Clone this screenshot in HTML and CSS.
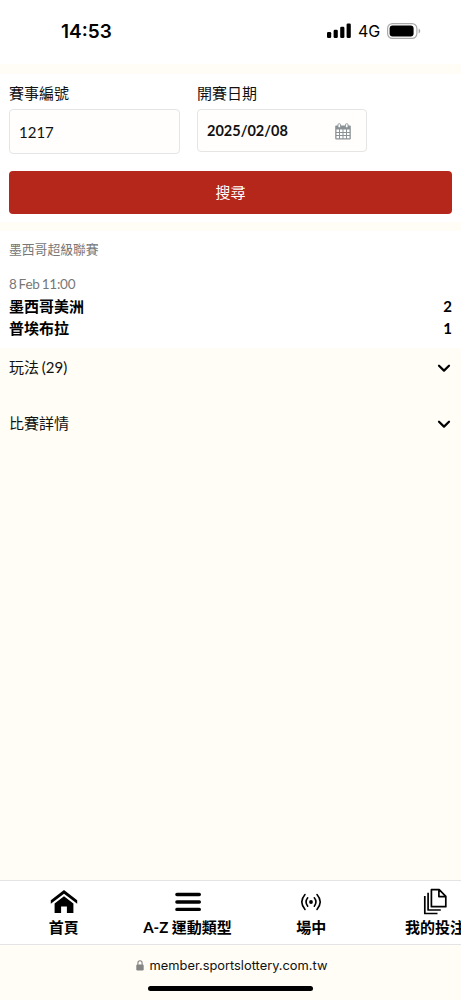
FILE: index.html
```html
<!DOCTYPE html>
<html lang="zh-Hant">
<head>
<meta charset="utf-8">
<meta name="viewport" content="width=device-width, initial-scale=1">
<title>賽事結果</title>
<link rel="stylesheet" href="styles.css">
</head>
<body>
<div class="screen">
  <header class="status">
    <span class="time">14:53</span>
    <div class="indicators">
      <svg class="signal" width="24" height="16" viewBox="0 0 24 16"><rect x="0" y="9" width="4.2" height="6" rx="1.3"/><rect x="6.6" y="6.7" width="4.2" height="8.3" rx="1.3"/><rect x="13.2" y="3.7" width="4.2" height="11.3" rx="1.3"/><rect x="19.6" y="0.5" width="4.2" height="14.5" rx="1.3"/></svg>
      <span class="network">4G</span>
      <svg width="34" height="17" viewBox="0 0 34 17"><rect x=".6" y=".6" width="29.3" height="14.8" rx="4.8" fill="none" stroke="#aaa" stroke-width="1.2"/><rect x="2.6" y="2.6" width="24" height="10.8" rx="3"/><path d="M31.6 5.5q1.7.8 1.7 2.5t-1.7 2.5z" fill="#aaa"/></svg>
    </div>
  </header>

  <form class="search">
    <div class="fields">
      <div class="field field-id">
        <label>賽事編號</label>
        <div class="box box-id">1217</div>
      </div>
      <div class="field field-date">
        <label>開賽日期</label>
        <div class="box box-date"><span>2025/02/08</span>
          <svg class="calendar" width="16" height="17" viewBox="0 0 16 17"><path d="M1 2.5h14a.8.8 0 0 1 .8.8v12.2a1 1 0 0 1-1 1H1.2a1 1 0 0 1-1-1V3.3a.8.8 0 0 1 .8-.8z" fill="#8b9295"/><path d="M1.5 6.6h2.500v2.300h-2.500zM5 6.600h2.500v2.300H5zM8.500 6.600H11v2.300H8.500zM12 6.600h2.500v2.300H12zM1.500 9.900h2.500v2.200h-2.500zM5 9.900h2.500v2.200H5zM8.500 9.900H11v2.200H8.500zM12 9.900h2.500v2.200H12zM1.500 13.100h2.500v2.200h-2.500zM5 13.100h2.500v2.200H5zM8.500 13.100H11v2.200H8.500zM12 13.100h2.500v2.200H12z" fill="#fff"/><rect x="3" y=".7" width="2.500" height="4" rx="1.100" fill="#fff" stroke="#8b9295" stroke-width=".9"/><rect x="10.500" y=".7" width="2.500" height="4" rx="1.100" fill="#fff" stroke="#8b9295" stroke-width=".9"/></svg>
        </div>
      </div>
    </div>
    <button class="submit" type="button">搜尋</button>
  </form>

  <section class="match">
    <div class="league">墨西哥超級聯賽</div>
    <div class="kickoff">8 Feb 11:00</div>
    <div class="team"><span>墨西哥美洲</span><span class="score">2</span></div>
    <div class="team"><span>普埃布拉</span><span class="score">1</span></div>
  </section>

  <main class="details">
    <div class="row"><span class="row-title">玩法 (29)</span><svg class="chevron" width="14" height="9" viewBox="0 0 14 9"><path d="M2 1.700 7 6.600l5-4.900"/></svg></div>
    <div class="row"><span class="row-title">比賽詳情</span><svg class="chevron" width="14" height="9" viewBox="0 0 14 9"><path d="M2 1.700 7 6.600l5-4.900"/></svg></div>
  </main>

  <nav class="tabs">
    <div class="tab">
      <svg width="28" height="28" viewBox="0 0 28 28"><path d="M14 3 .8 13.200v3.500L14 6.700l13.200 10v-3.500z"/><path d="M14 9.300 4.600 16.500V26h6.500v-6.500h5.800V26h6.500v-9.500z"/></svg>
      <span>首頁</span>
    </div>
    <div class="tab">
      <svg width="28" height="28" viewBox="0 0 28 28"><path d="M2.900 7.500h22.400M2.900 15h22.400M2.900 22.400h22.400" fill="none" stroke="#000" stroke-width="3.400" stroke-linecap="round"/></svg>
      <span>A-Z 運動類型</span>
    </div>
    <div class="tab">
      <svg width="28" height="28" viewBox="0 0 28 28"><circle cx="14" cy="15" r="1.900"/><path d="M10.700 10.800q-3.300 4.200 0 8.400M17.300 10.800q3.300 4.200 0 8.400M8 7.600q-6.400 7.400 0 14.800M20 7.600q6.400 7.400 0 14.800" fill="none" stroke="#000" stroke-width="1.600" stroke-linecap="round"/></svg>
      <span>場中</span>
    </div>
    <div class="tab">
      <svg width="28" height="28" viewBox="0 0 28 28"><g fill="none" stroke="#000" stroke-width="1.700" stroke-linejoin="round"><path d="M10.400 2.700h7.800l6.600 6.600v10.400H10.400zM17.900 2.700v6.900h6.900M7.100 5.700V23h12.700M3.800 9v17.500h12.700"/></g></svg>
      <span>我的投注</span>
    </div>
  </nav>

  <footer class="browser">
    <div class="address"><svg width="8" height="11" viewBox="0 0 8 11"><rect x=".3" y="4.500" width="7.400" height="6" rx="1.200" fill="#858585"/><path d="M1.900 5V3a2.100 2.300 0 0 1 4.200 0v2" fill="none" stroke="#858585" stroke-width="1.100"/></svg><span>member.sportslottery.com.tw</span></div>
    <div class="home-bar"></div>
  </footer>
</div>
</body>
</html>
```
FILE: styles.css
```css
* { box-sizing: border-box; }
body {
  margin: 0;
  background: #fffdf5;
  color: #111;
  font-family: Lato, "Noto Sans CJK TC", sans-serif;
  font-size: 15px;
}
svg { display: block; flex: none; }
.screen {
  display: flex;
  flex-direction: column;
  width: 461px;
  height: 1000px;
  overflow: hidden;
}
.status {
  display: flex;
  justify-content: space-between;
  height: 64px;
  padding: 20px 40px 0 61px;
  background: #fff;
  color: #000;
  font-family: Inter, sans-serif;
}
.time { font-size: 19px; font-weight: 600; line-height: 23px; }
.indicators { display: flex; align-items: center; height: 23px; }
.signal { margin-bottom: 1px; }
.network { width: 29px; margin-left: 7px; font-size: 16px; font-weight: 400; line-height: 23px; }
.search {
  height: 148px;
  margin-top: 10px;
  padding: 9px 9px 0;
  background: #fff;
}
.fields { display: flex; gap: 17px; height: 88px; }
.field label { display: block; height: 26px; line-height: 20px; }
.field-id { width: 171px; }
.field-date { width: 170px; }
.box {
  display: flex;
  align-items: center;
  border: 1px solid #e5e5e5;
  border-radius: 4px;
  background: #fffefc;
  padding: 0 9px;
}
.box-id { height: 45px; font-size: 15px; }
.box-date { justify-content: space-between; height: 43px; padding-right: 15px; font-size: 14.500px; font-weight: 700; }
.calendar { margin-top: 2px; }
.submit {
  display: block;
  width: 100%;
  height: 43px;
  padding: 0 0 2px;
  border: 0;
  border-radius: 4px;
  background: #b5261b;
  color: #fff;
  font: inherit;
}
.match {
  height: 117px;
  margin-top: 9px;
  padding: 8px 9px 0;
  background: #fff;
}
.league, .kickoff { color: #777; font-size: 12.800px; line-height: 20px; }
.kickoff { margin-top: 15px; font-size: 13.500px; letter-spacing: -.2px; word-spacing: -1.300px; }
.team {
  display: flex;
  justify-content: space-between;
  height: 21.500px;
  color: #000;
  font-weight: 700;
  line-height: 24px;
}
.details { flex: 1; padding: 0 9px; }
.row {
  display: flex;
  align-items: center;
  justify-content: space-between;
  height: 40px;
  margin-bottom: 16px;
}
.row-title { padding-bottom: 4px; word-spacing: -1px; }
.chevron { margin-right: 1px; fill: none; stroke: #000; stroke-width: 2.200; stroke-linecap: round; stroke-linejoin: round; }
.tabs {
  display: flex;
  height: 65px;
  padding-left: 2px;
  border-top: 1px solid #e4e4e4;
  border-bottom: 1px solid #e4e4e4;
  background: #fff;
}
.tab {
  display: flex;
  flex: 0 0 123.700px;
  flex-direction: column;
  align-items: center;
  padding-top: 6px;
  color: #000;
  font-size: 15px;
  font-weight: 700;
  line-height: 24px;
  white-space: nowrap;
}
.browser { height: 55px; padding-top: 10px; }
.address {
  display: flex;
  align-items: center;
  justify-content: center;
  gap: 6px;
  height: 20px;
  padding-left: 2px;
  font-family: Inter, sans-serif;
  font-size: 12.850px;
}
.home-bar { width: 165px; height: 5px; margin: 11px auto 0; border-radius: 3px; background: #000; }
```
